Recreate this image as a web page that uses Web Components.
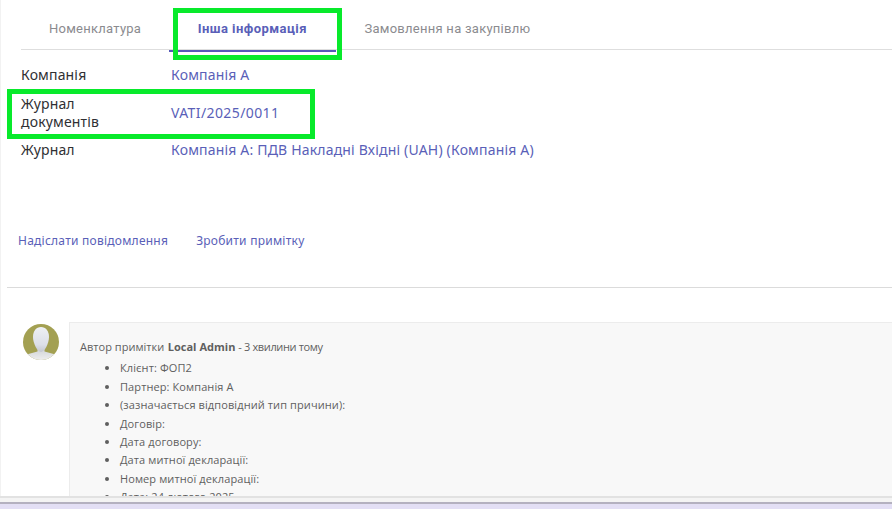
<!DOCTYPE html>
<html><head><meta charset="utf-8">
<style>
html,body{margin:0;padding:0;width:892px;height:509px;overflow:hidden;background:#e3dff5}
body{font-family:"Noto Sans",sans-serif}
</style></head>
<body>
<app-screen>
  <tab-bar>
    <tab-item>Номенклатура</tab-item>
    <tab-item active>Інша інформація</tab-item>
    <tab-item>Замовлення на закупівлю</tab-item>
  </tab-bar>
  <info-rows>
    <info-row label="Компанія">Компанія А</info-row>
    <info-row label="Журнал документів" tall style="--vls:.4px">VATI/2025/0011</info-row>
    <info-row label="Журнал">Компанія А: ПДВ Накладні Вхідні (UAH) (Компанія А)</info-row>
  </info-rows>
  <chat-actions></chat-actions>
  <note-item author="Local Admin" time="3 хвилини тому">
    <li>Клієнт: ФОП2</li>
    <li>Партнер: Компанія А</li>
    <li>(зазначається відповідний тип причини):</li>
    <li>Договір:</li>
    <li>Дата договору:</li>
    <li>Дата митної декларації:</li>
    <li>Номер митної декларації:</li>
    <li>Дата: 24 лютого 2025</li>
  </note-item>
  <mark-box style="left:173px;top:8px;width:169px;height:52px"></mark-box>
  <mark-box style="left:7px;top:89px;width:308px;height:50px"></mark-box>
</app-screen>
<script>
function def(name, css, html){
  customElements.define(name, class extends HTMLElement{
    constructor(){super();const r=this.attachShadow({mode:'open'});r.innerHTML='<style>'+css+'</style>'+(typeof html==='function'?html(this):html);}
  });
}
def('app-screen',`
  :host{display:flex;flex-direction:column;box-sizing:border-box;width:892px;height:509px;position:relative;overflow:hidden;background:#e3dff5}
  .paper{flex:none;height:498px;overflow:hidden;background:#fff;border-bottom:2px solid #e2e2e2;box-shadow:inset 1px 0 0 #f2f2f2;box-sizing:border-box}
  .gap{flex:none;height:4px;background:#f4f4f4}
  .edge{flex:none;height:2px;background:#b4b1c0}
  .base{flex:1;background:#e3dff5}
`,`<div class="paper"><slot></slot></div><div class="gap"></div><div class="edge"></div><div class="base"></div>`);
def('tab-bar',`
  :host{display:flex;box-sizing:border-box;height:50px;margin-left:21px;border-bottom:1px solid #dedede}
`,`<slot></slot>`);
def('tab-item',`
  :host{display:block;box-sizing:border-box;height:52px;padding:19px 28px 0;font:13px/20px Roboto,sans-serif;color:#8b8b8f;letter-spacing:.26px;white-space:nowrap}
  :host([active]){color:#5a5fb8;font-weight:700;letter-spacing:.45px;border-bottom:2px solid #5659b8;padding-left:28.500px;padding-right:29.500px}
`,`<slot></slot>`);
def('info-rows',`:host{display:block;padding:16px 0 0 21px}`,`<slot></slot>`);
def('info-row',`
  :host{display:grid;grid-template-columns:150px 1fr;align-items:center;font:14px/18px "Noto Sans",sans-serif;letter-spacing:.16px;color:#2f2f33;margin-bottom:11px}
  :host([tall]){margin-bottom:10px}
  :host(:last-child){margin-bottom:0}
  .l{width:100px}
  .v{color:#5a5fb8;letter-spacing:var(--vls,.18px)}
`,e=>`<div class="l">${e.getAttribute('label')}</div><div class="v"><slot></slot></div>`);
def('chat-actions',`
  :host{display:flex;gap:28px;height:18px;margin:72px 0 0 18px;padding-top:1px;margin-bottom:-1px;font:12px/18px "Noto Sans",sans-serif;letter-spacing:.24px;color:#5a5fb8}
`,`<span>Надіслати повідомлення</span><span>Зробити примітку</span>`);
def('note-item',`
  :host{display:flex;margin:38px 0 0 7px;border-top:1px solid #dbdbdb;padding:34px 0 0 16px;font:11px/18.4px "Open Sans",sans-serif;color:#5f5f5f}
  .av{flex:none;width:36px;height:36px;border-radius:50%;margin:2px 10px 0 0;overflow:hidden;display:block}
  .body{flex:1;background:#f8f8f8;border:1px solid #ececec;border-right:0;padding:15px 10px;min-height:200px}
  .head{line-height:18px;letter-spacing:.03px}
  b{letter-spacing:.02px;margin-left:.5px}
  .t{letter-spacing:-.36px}
  ul{margin:3.4px 0 0;padding:0 0 0 40px;letter-spacing:.1px}
`,e=>`<svg class="av" viewBox="0 0 36 36"><defs><linearGradient id="h" x1="0" y1="0" x2="0" y2="1"><stop offset="0" stop-color="#eef0f4"/><stop offset=".7" stop-color="#dcdfe8"/><stop offset="1" stop-color="#c4c7d0"/></linearGradient><linearGradient id="s" x1="0" y1="0" x2="0" y2="1"><stop offset="0" stop-color="#cfd2d6"/><stop offset="1" stop-color="#eeeeee"/></linearGradient></defs><rect width="36" height="36" fill="#a3a052"/><path d="M14.500 24h7v3.500l11 3V36H3.500v-5.500l11-3z" fill="url(#s)"/><path d="M18 3c4.800 0 8 4 8 10 0 6.500-4.500 15-8 15s-8-8.500-8-15C10 7 13.200 3 18 3z" fill="url(#h)"/></svg>
<div class="body"><div class="head">Автор примітки <b>${e.getAttribute('author')}</b> <span class="t">- ${e.getAttribute('time')}</span></div><ul><slot></slot></ul></div>`);
def('mark-box',`:host{position:absolute;box-sizing:border-box;border:5px solid #08ea2b;z-index:5}`,``);
</script>
</body></html>
